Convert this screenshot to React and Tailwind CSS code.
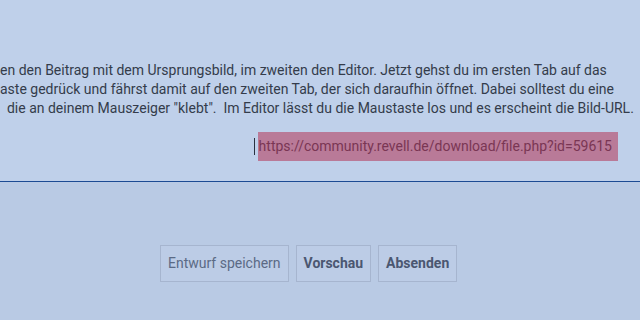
import React from "react";

const lines = [
  "en den Beitrag mit dem Ursprungsbild, im zweiten den Editor. Jetzt gehst du im ersten Tab auf das",
  "aste gedrück und fährst damit auf den zweiten Tab, der sich daraufhin öffnet. Dabei solltest du eine",
  "  die an deinem Mauszeiger \"klebt\".  Im Editor lässt du die Maustaste los und es erscheint die Bild-URL.",
];

export default function App() {
  return (
    <div
      className="w-[640px] h-[320px] overflow-hidden bg-[#bfd0ea] flex flex-col"
      style={{ fontFamily: "Roboto, 'Liberation Sans', sans-serif" }}
    >
      {/* Editor content */}
      <div className="h-[181px] flex flex-col pt-[61px]">
        <div className="text-[14px] leading-[19px] text-[#343c4b]">
          {lines.map((l, i) => (
            <div key={i} className="whitespace-pre">
              {l}
            </div>
          ))}
        </div>
        <div className="flex justify-end pr-[22px] mt-[14px]">
          <div className="flex items-center">
            <span className="w-px h-[17px] bg-[#2a3140] mr-[3px]" />
            <span className="bg-[#b97a98] text-[#7a3654] text-[14px] leading-[29px] pl-px pr-[6px]">
              https://community.revell.de/download/file.php?id=59615
            </span>
          </div>
        </div>
      </div>

      <div className="h-px bg-[#1d4b93]" />

      {/* Actions */}
      <div className="flex-1 bg-[#b9cae4] pt-[63px] pl-[160px]">
        <div className="flex gap-[7px] text-[14px]">
          <button className="h-[37px] px-[7px] border border-[#a6b5cf] bg-[#bccce6] text-[#5b6a85]">
            Entwurf speichern
          </button>
          <button className="h-[37px] px-[7px] border border-[#a6b5cf] bg-[#bccce6] text-[#4b5771] font-bold">
            Vorschau
          </button>
          <button className="h-[37px] px-[7px] border border-[#a6b5cf] bg-[#bccce6] text-[#4b5771] font-bold">
            Absenden
          </button>
        </div>
      </div>
    </div>
  );
}
